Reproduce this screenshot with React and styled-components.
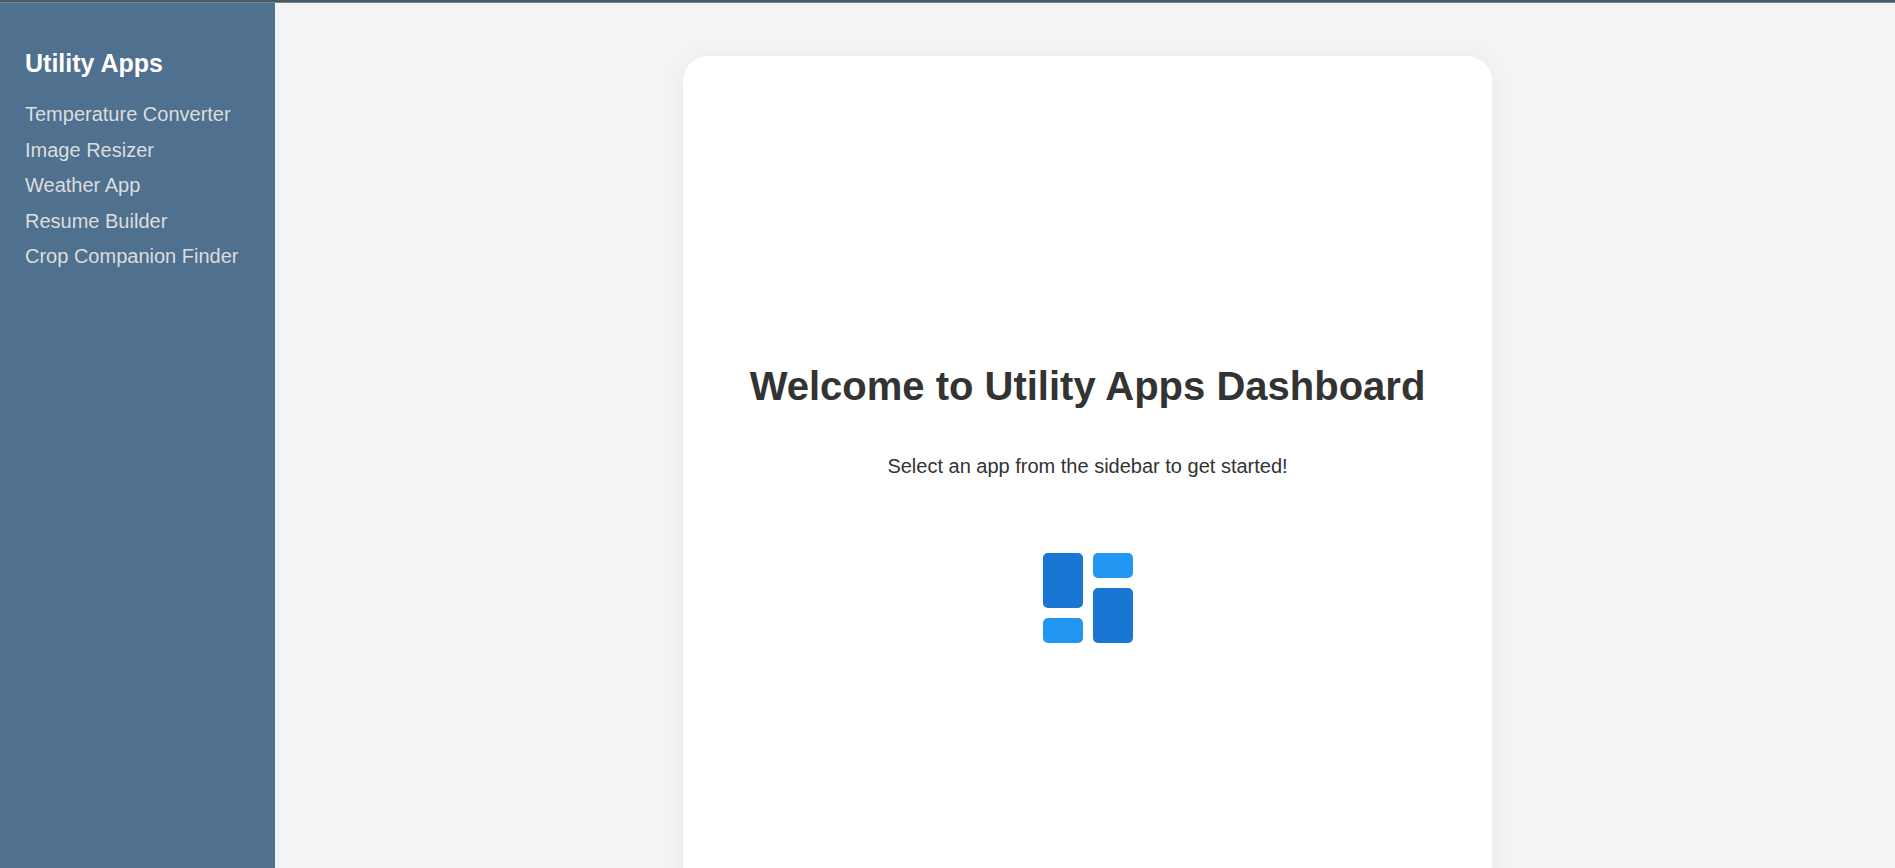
import React from "react";
import styled, { createGlobalStyle } from "styled-components";

const GlobalStyle = createGlobalStyle`
  * { box-sizing: border-box; }
  body {
    margin: 0;
    overflow: hidden;
    background: #f4f4f4;
    color: #333333;
    font-family: Arial, "Liberation Sans", sans-serif;
    font-size: 20px;
    line-height: 24px;
  }
`;

const Page = styled.div`
  display: flex;
  flex-direction: column;
  height: 100vh;
`;

const TopBar = styled.div`
  flex: none;
  height: 3px;
  background: #455a64;
  border-bottom: 1px solid #75868d;
`;

const Body = styled.div`
  display: flex;
  flex: 1;
  gap: 5px;
  min-height: 0;
`;

const Sidebar = styled.aside`
  flex: none;
  width: 275px;
  padding: 44px 25px;
  background: #50708f;
`;

const SidebarTitle = styled.h2`
  margin: 0 0 23px;
  color: #ffffff;
  font-size: 25px;
  line-height: 32px;
`;

const NavList = styled.ul`
  display: flex;
  flex-direction: column;
  justify-content: space-between;
  height: 166px;
  margin: 0;
  padding: 0;
  list-style: none;
`;

const NavLink = styled.a`
  color: #dddddd;
  text-decoration: none;
`;

const Main = styled.main`
  display: flex;
  flex: 1;
  justify-content: center;
  align-items: flex-start;
  padding-top: 53px;
`;

const Card = styled.section`
  display: flex;
  flex-direction: column;
  justify-content: center;
  align-items: center;
  min-height: 100vh;
  padding: 74px 67px 50px;
  border-radius: 25px;
  background: #ffffff;
  box-shadow: 0 0 25px rgba(0, 0, 0, 0.05);
`;

const Title = styled.h1`
  margin: 0 0 44px;
  font-size: 40px;
  line-height: 48px;
`;

const Lead = styled.p`
  margin: 0 0 75px;
`;

const Logo = styled.svg`
  display: block;
  width: 90px;
  height: 90px;
`;

const apps = [
  "Temperature Converter",
  "Image Resizer",
  "Weather App",
  "Resume Builder",
  "Crop Companion Finder",
];

export default function App() {
  return (
    <Page>
      <GlobalStyle />
      <TopBar />
      <Body>
        <Sidebar>
          <SidebarTitle>Utility Apps</SidebarTitle>
          <nav aria-label="Utility Apps">
            <NavList>
              {apps.map((app) => (
                <li key={app}>
                  <NavLink href={"#" + app.toLowerCase().replaceAll(" ", "-")}>{app}</NavLink>
                </li>
              ))}
            </NavList>
          </nav>
        </Sidebar>
        <Main>
          <Card>
            <Title>Welcome to Utility Apps Dashboard</Title>
            <Lead>Select an app from the sidebar to get started!</Lead>
            <Logo viewBox="0 0 90 90" aria-hidden="true">
              <rect width="40" height="55" rx="5" fill="#1976d2" />
              <rect x="50" width="40" height="25" rx="5" fill="#2196f3" />
              <rect y="65" width="40" height="25" rx="5" fill="#2196f3" />
              <rect x="50" y="35" width="40" height="55" rx="5" fill="#1976d2" />
            </Logo>
          </Card>
        </Main>
      </Body>
    </Page>
  );
}
